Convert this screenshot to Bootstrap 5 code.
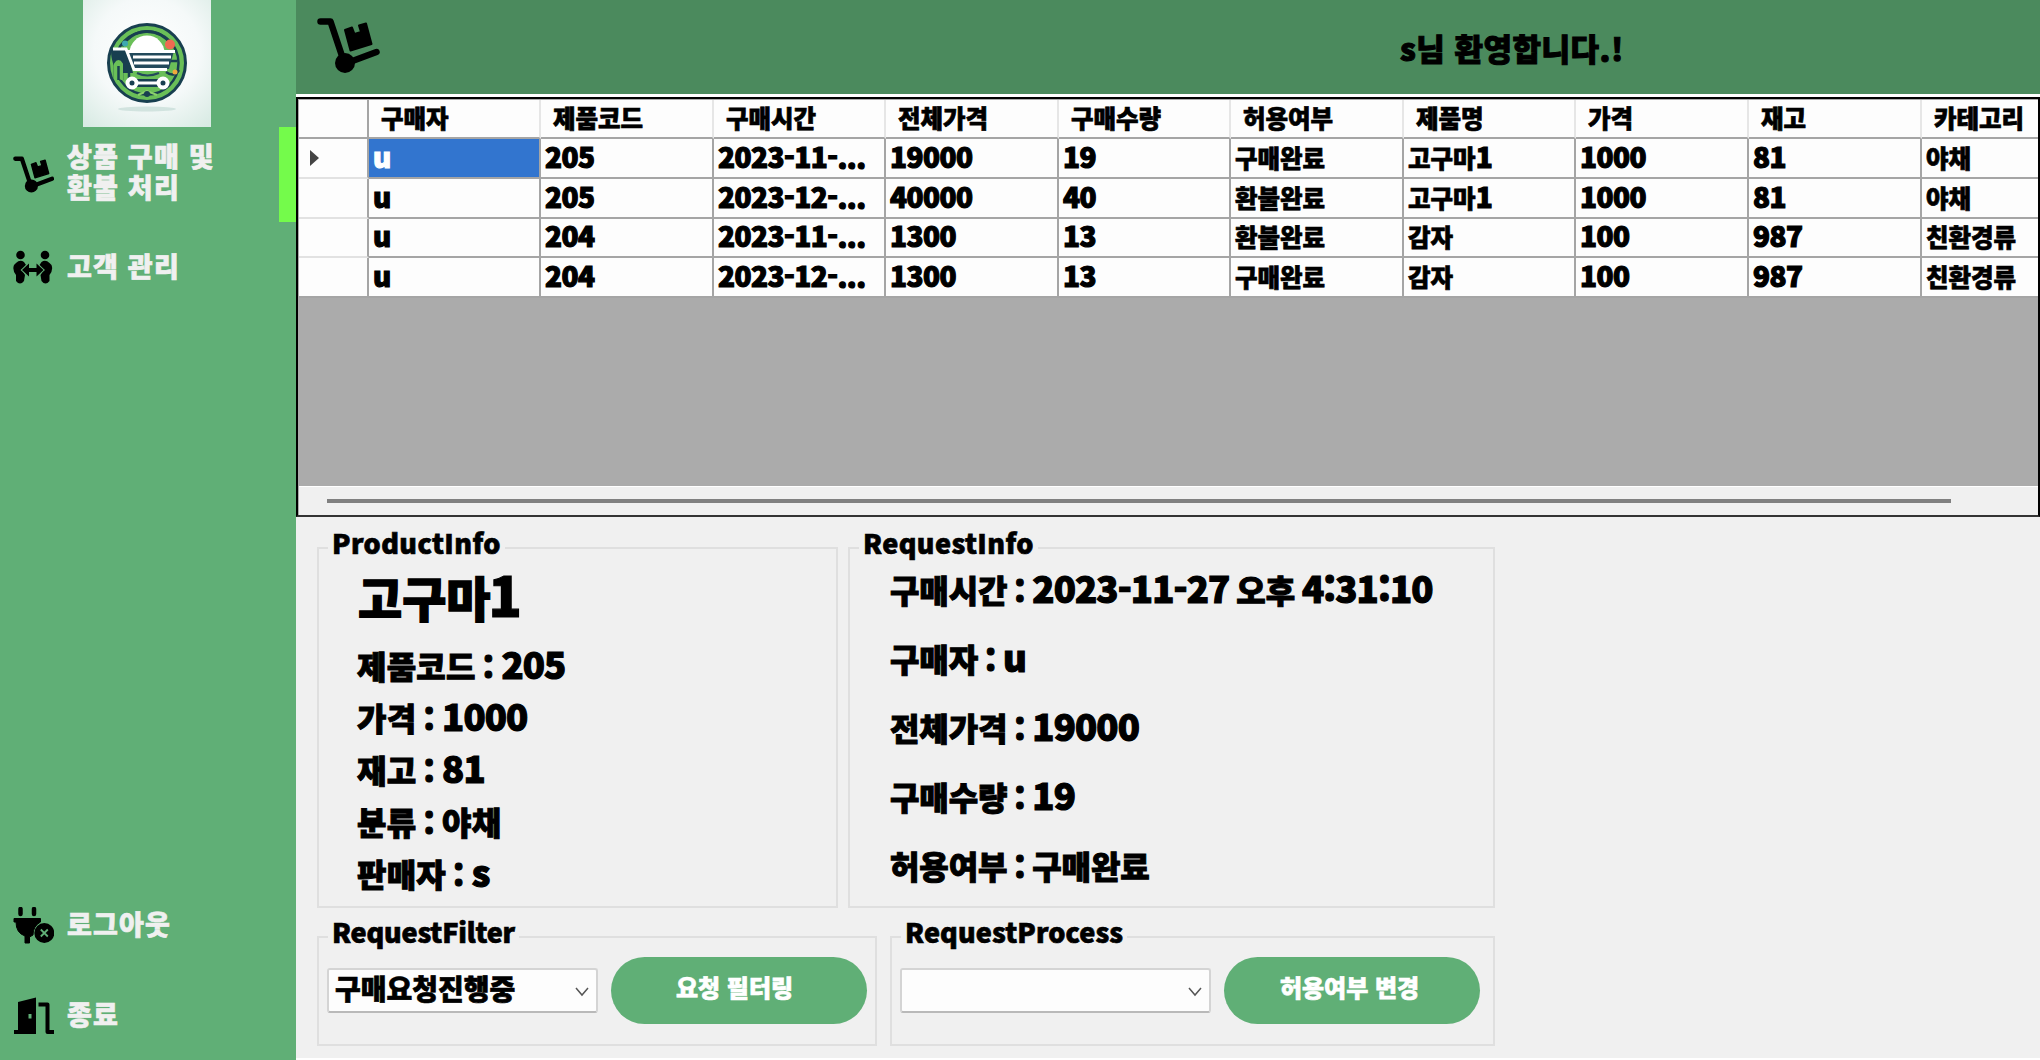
<!DOCTYPE html>
<html lang="ko">
<head>
<meta charset="utf-8">
<title>상품 구매 및 환불 처리</title>
<link href="https://cdn.jsdelivr.net/npm/bootstrap@5.3.0/dist/css/bootstrap.min.css" rel="stylesheet">
<style>
:root{--leaf:#60af76;--face:#f0f0f0}
html,body{height:100%}
body{font-family:"Noto Sans CJK KR",sans-serif;font-weight:900;color:#000;background:var(--face);overflow:hidden;width:2040px;height:1060px;-webkit-text-stroke:.7px currentColor;line-height:1}
main{border-right:2px solid #3a3a3a;background:linear-gradient(#fff 0 97px,var(--face) 97px)}
.n{font-size:1.14em;letter-spacing:-.5px;line-height:1;-webkit-text-stroke-width:1.2px}
.side{width:296px;background:var(--leaf);color:#f0f0f0}
.logo{width:128px;height:127px;margin-left:83px}
.navi{padding-left:13px;font-size:27px;line-height:31px;letter-spacing:1.2px}
.navi svg{width:41px;flex:none;margin-right:13px}
.navi span{margin-bottom:3px}
.navi.on span{margin-bottom:8px}
.navi.on{height:95px;border-right:17px solid #74fb4b}
.navi.cust{height:82px}
.navi.out{height:90px}
.top-bar{height:94px;background:#4b8a5d;padding-left:20px}
.top-bar svg{width:66px;height:60px}
.hello{font-size:31px;margin-left:1018px;letter-spacing:.5px;-webkit-text-stroke-width:1px}
.grid-wrap{height:420px;border:2px solid #000;border-bottom-color:#333;background:#ababab;margin-top:3px;padding:1px 0 0 1px}
.grid-wrap table{table-layout:fixed;width:1739px;border-collapse:separate;border-spacing:0;font-size:24.5px;background:#fdfdfd}
.grid-wrap th,.grid-wrap td{padding:0 0 1px 4px;height:40px;border-right:2px solid #a5a5a5;border-bottom:2px solid #a5a5a5;white-space:nowrap;vertical-align:middle;font-weight:900;line-height:30px}
.grid-wrap tr.short td,.grid-wrap tr.short th{height:39px}
.grid-wrap thead th{height:39px;padding-left:12px;padding-bottom:2px;border-right-color:#e6e6e6}
.grid-wrap th:first-child{border-bottom-color:#e2e2e2;border-right-color:#a5a5a5;padding-left:11px}
.grid-wrap thead th:first-child,.grid-wrap tbody tr:last-child th{border-bottom-color:#a5a5a5}
.grid-wrap tr>:last-child{border-right:0}
td.picked{background:#3275cf;color:#fff}
.arrow{width:0;height:0;border:8px solid transparent;border-left:9px solid #444;border-right:0}
.hbar{height:29px;background:var(--face);border-top:1px solid #fff}
.thumb{height:4px;width:1624px;margin-left:28px;background:#808080}
.area{padding:30px 0 0 21px}
.gbox{border:2px solid #dfdfdf}
.gtitle{align-self:flex-start;font-size:27px;line-height:28px;letter-spacing:.4px;margin:-20px 0 0 9px;padding:0 4px;background:var(--face)}
.filt .gtitle{letter-spacing:-.2px}.proc .gtitle{letter-spacing:.1px}
.prod{width:521px;height:361px}.req{width:647px;height:361px;margin-left:10px}
.filt{width:560px;height:110px}.proc{width:605px;height:110px;margin-left:13px}
.pname{font-size:48px;line-height:48px;margin:10px 0 17px 39px;-webkit-text-stroke-width:1.4px}
.pname .n{margin-left:-2px}
.line{font-size:32px;letter-spacing:.2px;white-space:pre;word-spacing:-2px;-webkit-text-stroke-width:1px}
.line .n{letter-spacing:-.9px}
.prod .line{height:52px;line-height:52px;margin-left:38px}
.req .line{height:69px;line-height:69px;margin-left:40px;letter-spacing:-.1px}
.req .line .n{letter-spacing:-.85px}
.req .gtitle{margin-bottom:-2px}
.lower{margin-top:28px}
.ctl{margin-top:11px}
.combo{height:45px;border:2px solid #d4d4d4;border-bottom-color:#b9b9b9;border-radius:3px;background:#fdfdfd;font-size:28px;padding:0 6px 5px;margin-left:8px}
.combo.what{width:271px}.combo.verdict{width:311px}
.combo svg{width:16px;height:10px;margin-top:7px}
.pill{width:256px;height:67px;border:0;border-radius:34px;background:var(--leaf);color:#fff;font-weight:900;font-size:24px;padding:0 9px 8px 0;-webkit-text-stroke:.7px #fff;line-height:1;margin-left:13px}
.pill.chg{padding-right:5px}
.bottom-strip{height:2px;background:#fff}
</style>
</head>
<body class="d-flex">
<svg width="0" height="0" class="position-absolute">
<symbol id="dolly" viewBox="316 14 66 60"><path d="M320.500 20.500H330.500L343 58M347 62L376.500 51" fill="none" stroke="#000" stroke-width="6.500" stroke-linecap="round" stroke-linejoin="round"/><circle cx="345" cy="62" r="10"/><path d="M345 29L352 26.500L354.500 33L361 31L359 24.500L366 22.500L371.500 43L350.500 49.500Z" stroke="#000" stroke-width="2" stroke-linejoin="round"/></symbol>
</svg>
<aside class="side d-flex flex-column flex-shrink-0">
  <svg class="logo flex-shrink-0" viewBox="0 0 128 127">
    <defs><radialGradient id="paper" cx=".5" cy=".4" r=".75"><stop offset="0" stop-color="#fff"/><stop offset=".55" stop-color="#f5f9f9"/><stop offset="1" stop-color="#d9ebe4"/></radialGradient></defs>
    <rect width="128" height="127" fill="url(#paper)"/>
    <ellipse cx="64" cy="109" rx="29" ry="2.500" fill="#c5dcd5" opacity=".7"/>
    <circle cx="64" cy="63" r="38.500" fill="#6abf58" stroke="#183f50" stroke-width="3"/>
    <circle cx="64" cy="63" r="31.500" fill="none" stroke="#183f50" stroke-width="2.500"/>
    <path d="M39 46A29 29 0 0 1 88 44" fill="none" stroke="#183f50" stroke-width="3"/>
    <path d="M28 49H44L50 73H36C30 66 28 60 28 49Z" fill="#183f50"/>
    <path d="M32 78V61Q36 57 39 61V80M46 88V72M83 72Q91 78 96 70M84 61H94" fill="none" stroke="#183f50" stroke-width="2.500"/>
    <path d="M32 78V64Q35.500 58 39 64V80" fill="#6abf58" stroke="#6abf58" stroke-width="2"/>
    <path d="M35.500 66V80" stroke="#183f50" stroke-width="2.500"/>
    <path d="M55 95L64 91L74 95" fill="none" stroke="#8bd16b" stroke-width="2"/>
    <circle cx="64" cy="53" r="17.500" fill="#fff"/>
    <path d="M45 51H91L86 69H50Z" fill="#23495b"/>
    <path d="M30 49H43L51 69.500H84M45 51.500H92M50 57H88M51 63H86" fill="none" stroke="#fff" stroke-width="3"/>
    <path d="M54 73Q64 78 76 73" fill="none" stroke="#23495b" stroke-width="2"/>
    <path d="M49 83H80" stroke="#183f50" stroke-width="8"/><path d="M49 83H80" stroke="#fff" stroke-width="3"/>
    <g fill="#183f50" stroke="#fff" stroke-width="4"><circle cx="49" cy="83" r="4.500"/><circle cx="80" cy="83" r="4.500"/></g>
    <circle cx="64" cy="94" r="3" fill="#183f50"/>
    <circle cx="87" cy="44.500" r="5" fill="#ef6a51"/><circle cx="42" cy="43.500" r="3" fill="#3fa9b0"/><circle cx="92" cy="72" r="2.500" fill="#efaa3c"/>
  </svg>
  <div class="navi on d-flex align-items-center"><svg height="37" viewBox="317 16.500 62.500 56"><use href="#dolly" x="316" y="14" width="66" height="60"/></svg><span>상품 구매 및<br>환불 처리</span></div>
  <div class="navi cust d-flex align-items-center mt-1"><svg height="36" viewBox="13 249 41 36"><circle cx="20.500" cy="255" r="4.300"/><circle cx="45" cy="255" r="4.300"/><path d="M16 263Q20 259 24 262L26 265L22 270L25 275L24 281Q20 286 16 281V275Q12 270 14 265ZM49.500 263Q45.500 259 41.500 262L39.500 265L43.500 270L40.500 275L41.500 281Q45.500 286 49.500 281V275Q53.500 270 51.500 265Z"/><path d="M22 270L29 263.500V268H36.500V263.500L43.500 270L36.500 276.500V272H29V276.500Z" stroke="#60af76" stroke-width="2" paint-order="stroke"/></svg><span>고객 관리</span></div>
  <div class="navi out d-flex align-items-center mt-auto"><svg height="37" viewBox="13 907 41 37"><path d="M20.500 909V914M34 909V914" stroke="#000" stroke-width="4.500" stroke-linecap="round"/><path d="M14 918.500H40.500V922Q33 926 33 935L29.500 937V943H25V936Q16 933 16 922H14Z" stroke="#000"/><circle cx="44.300" cy="933" r="10"/><path d="M40.800 929.500L47.800 936.500M47.800 929.500L40.800 936.500" stroke="#60af76" stroke-width="1.800"/></svg><span>로그아웃</span></div>
  <div class="navi out d-flex align-items-center"><svg height="37" viewBox="13 996 41 37"><path d="M14 1029H18V1001L36 996.500V1033H14ZM28.500 1013V1017.500H31.500V1013Z" fill-rule="evenodd"/><path d="M38.500 1003.500H47.500V1031H54" fill="none" stroke="#000" stroke-width="4" stroke-linejoin="round"/></svg><span>종료</span></div>
</aside>
<main class="flex-grow-1 d-flex flex-column">
  <header class="top-bar d-flex align-items-center flex-shrink-0"><svg class="mb-1"><use href="#dolly"/></svg><span class="hello">s님 환영합니다.!</span></header>
  <section class="grid-wrap flex-shrink-0 d-flex flex-column">
    <table>
      <colgroup><col style="width:70px"><col style="width:172px"><col style="width:173px"><col style="width:172px"><col style="width:173px"><col style="width:172px"><col style="width:173px"><col style="width:172px"><col style="width:173px"><col style="width:173px"><col style="width:116px"></colgroup>
      <thead><tr><th></th><th>구매자</th><th>제품코드</th><th>구매시간</th><th>전체가격</th><th>구매수량</th><th>허용여부</th><th>제품명</th><th>가격</th><th>재고</th><th>카테고리</th></tr></thead>
      <tbody>
        <tr><th><div class="arrow"></div></th><td class="picked"><span class="n">u</span></td><td><span class="n">205</span></td><td><span class="n">2023-11-...</span></td><td><span class="n">19000</span></td><td><span class="n">19</span></td><td>구매완료</td><td>고구마<span class="n">1</span></td><td><span class="n">1000</span></td><td><span class="n">81</span></td><td>야채</td></tr>
        <tr><th></th><td><span class="n">u</span></td><td><span class="n">205</span></td><td><span class="n">2023-12-...</span></td><td><span class="n">40000</span></td><td><span class="n">40</span></td><td>환불완료</td><td>고구마<span class="n">1</span></td><td><span class="n">1000</span></td><td><span class="n">81</span></td><td>야채</td></tr>
        <tr class="short"><th></th><td><span class="n">u</span></td><td><span class="n">204</span></td><td><span class="n">2023-11-...</span></td><td><span class="n">1300</span></td><td><span class="n">13</span></td><td>환불완료</td><td>감자</td><td><span class="n">100</span></td><td><span class="n">987</span></td><td>친환경류</td></tr>
        <tr><th></th><td><span class="n">u</span></td><td><span class="n">204</span></td><td><span class="n">2023-12-...</span></td><td><span class="n">1300</span></td><td><span class="n">13</span></td><td>구매완료</td><td>감자</td><td><span class="n">100</span></td><td><span class="n">987</span></td><td>친환경류</td></tr>
      </tbody>
    </table>
    <div class="hbar mt-auto d-flex align-items-center"><div class="thumb"></div></div>
  </section>
  <section class="area flex-grow-1">
    <div class="d-flex">
      <div class="gbox prod d-flex flex-column"><div class="gtitle">ProductInfo</div>
        <div class="pname">고구마<span class="n">1</span></div>
        <div class="line">제품코드 : <span class="n">205</span></div><div class="line">가격 : <span class="n">1000</span></div><div class="line">재고 : <span class="n">81</span></div><div class="line">분류 : 야채</div><div class="line">판매자 : <span class="n">s</span></div>
      </div>
      <div class="gbox req d-flex flex-column"><div class="gtitle">RequestInfo</div>
        <div class="line">구매시간 : <span class="n">2023-11-27</span> 오후 <span class="n">4:31:10</span></div><div class="line">구매자 : <span class="n">u</span></div><div class="line">전체가격 : <span class="n">19000</span></div><div class="line">구매수량 : <span class="n">19</span></div><div class="line">허용여부 : 구매완료</div>
      </div>
    </div>
    <div class="d-flex lower">
      <div class="gbox filt"><div class="d-flex flex-column"><div class="gtitle">RequestFilter</div></div>
        <div class="d-flex align-items-center ctl"><div class="combo what d-flex align-items-center justify-content-between"><span>구매요청진행중</span><svg viewBox="0 0 16 10"><path d="M2 1L8 8L14 1" fill="none" stroke="#555" stroke-width="1.500"/></svg></div><button class="pill">요청 필터링</button></div>
      </div>
      <div class="gbox proc"><div class="d-flex flex-column"><div class="gtitle">RequestProcess</div></div>
        <div class="d-flex align-items-center ctl"><div class="combo verdict d-flex align-items-center justify-content-end"><svg viewBox="0 0 16 10"><path d="M2 1L8 8L14 1" fill="none" stroke="#555" stroke-width="1.500"/></svg></div><button class="pill chg">허용여부 변경</button></div>
      </div>
    </div>
  </section>
  <div class="bottom-strip"></div>
</main>
<script src="https://cdn.jsdelivr.net/npm/bootstrap@5.3.0/dist/js/bootstrap.bundle.min.js"></script>
</body>
</html>
